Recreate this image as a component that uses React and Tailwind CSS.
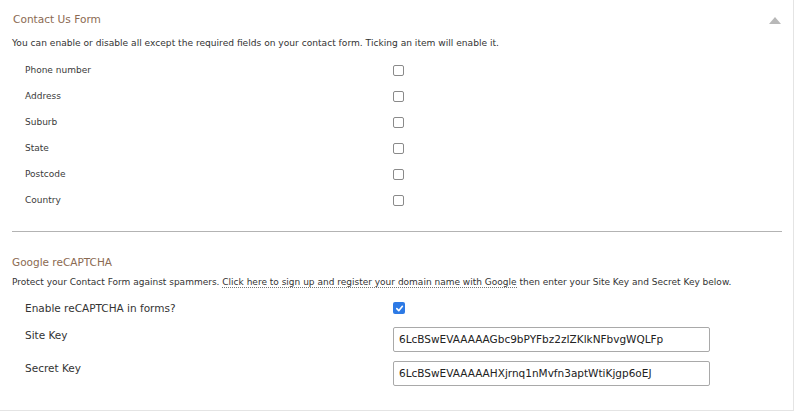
export default function App() {
  const fields = ['Phone number', 'Address', 'Suburb', 'State', 'Postcode', 'Country'];

  return (
    <div
      className="w-[794px] h-[411px] bg-white border-r border-b border-[#e4e4e4] pl-3 pr-[11px] text-[#333]"
      style={{ fontFamily: '"DejaVu Sans", "Noto Sans", sans-serif' }}
    >
      <div className="flex items-center justify-between pt-[11px]">
        <div className="text-[10.6px] leading-4 text-[#8b6a52] pl-px">Contact Us Form</div>
        <div className="w-0 h-0 border-l-[6px] border-r-[6px] border-b-[7px] border-l-transparent border-r-transparent border-b-[#b8b8b8] mt-[3px] mr-[1px]" />
      </div>

      <p className="mt-[8px] text-[9.1px] leading-4">
        You can enable or disable all except the required fields on your contact form. Ticking an item will enable it.
      </p>

      <div className="mt-[6px]">
        {fields.map((f) => (
          <div key={f} className="flex items-center h-[26px]">
            <span className="w-[381px] pl-[13px] pt-[1px] text-[9px] text-[#3a3a3a]">{f}</span>
            <span className="w-[11px] h-[11px] rounded-[2px] border border-[#8a8a8a] bg-white" />
          </div>
        ))}
      </div>

      <div className="mt-[18px] h-px bg-[#b3b3b3]" />

      <div className="mt-[22px] text-[10.5px] leading-4 text-[#8b6a52]">Google reCAPTCHA</div>
      <p className="mt-[4px] text-[9px] leading-4">
        Protect your Contact Form against spammers.{' '}
        <span className="border-b border-dotted border-[#777]">
          Click here to sign up and register your domain name with Google
        </span>{' '}
        then enter your Site Key and Secret Key below.
      </p>

      <div className="mt-[5px] flex items-center h-[26px]">
        <span className="w-[381px] pl-[13px] pt-[1px] text-[10.5px]">Enable reCAPTCHA in forms?</span>
        <span className="w-[12px] h-[12px] rounded-[2px] bg-[#2d7ae5] flex items-center justify-center">
          <svg width="9" height="9" viewBox="0 0 10 10" fill="none">
            <path d="M2 5.2 L4.2 7.4 L8.2 2.6" stroke="white" strokeWidth="1.8" strokeLinecap="round" strokeLinejoin="round" />
          </svg>
        </span>
      </div>

      <div className="mt-[6px] flex items-start">
        <span className="w-[381px] pl-[13px] text-[10.5px] leading-4">Site Key</span>
        <div className="w-[317px] h-[25px] border border-[#a9a9a9] rounded-[2px] flex items-center px-[5px] text-[10.5px] text-[#222]">
          6LcBSwEVAAAAAGbc9bPYFbz2zIZKlkNFbvgWQLFp
        </div>
      </div>

      <div className="mt-[9px] flex items-start">
        <span className="w-[381px] pl-[13px] text-[10.5px] leading-[14px]">Secret Key</span>
        <div className="w-[317px] h-[25px] border border-[#a9a9a9] rounded-[2px] flex items-center px-[5px] text-[10.5px] text-[#222]">
          6LcBSwEVAAAAAHXjrnq1nMvfn3aptWtiKjgp6oEJ
        </div>
      </div>
    </div>
  );
}
